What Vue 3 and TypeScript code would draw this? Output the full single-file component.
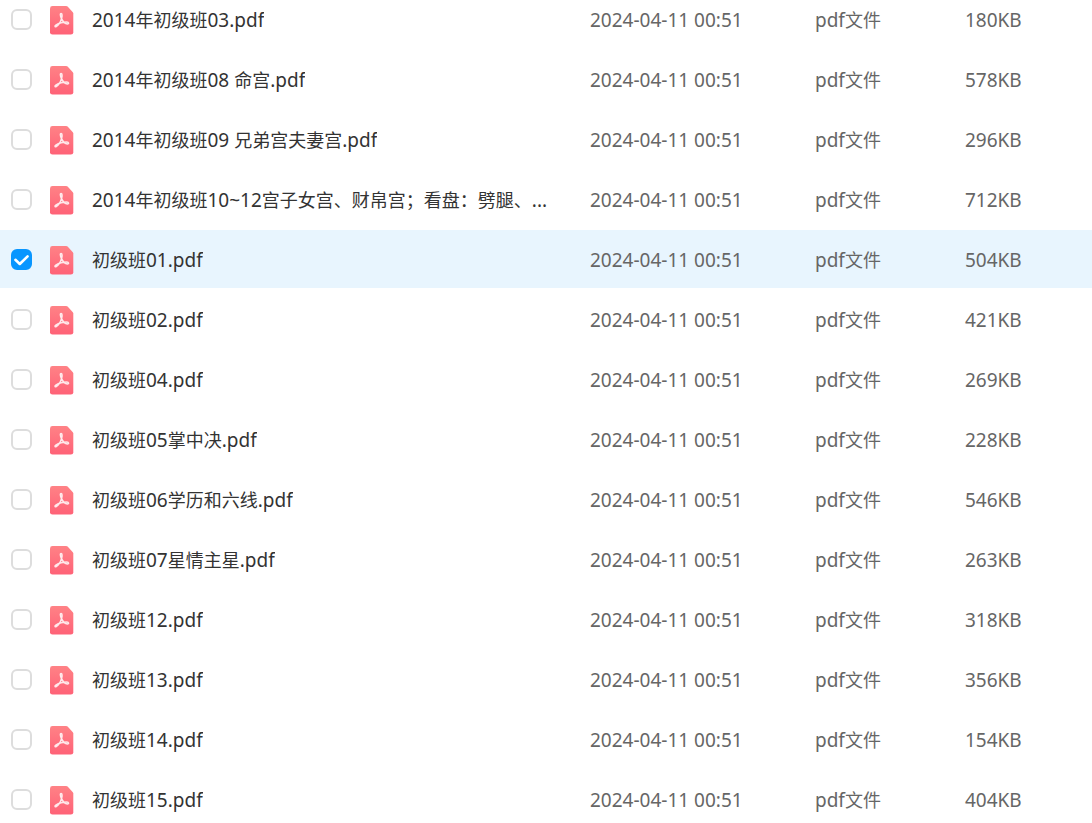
<script setup lang="ts">
import { ref } from 'vue'

interface FileRow {
  name: string
  size: string
  checked: boolean
}

interface Run {
  text: string
  han: boolean
}

const modified = '2024-04-11 00:51'
const kind = 'pdf文件'

const files = ref<FileRow[]>([
  { name: '2014年初级班03.pdf', size: '180KB', checked: false },
  { name: '2014年初级班08 命宫.pdf', size: '578KB', checked: false },
  { name: '2014年初级班09 兄弟宫夫妻宫.pdf', size: '296KB', checked: false },
  { name: '2014年初级班10~12宫子女宫、财帛宫；看盘：劈腿、...', size: '712KB', checked: false },
  { name: '初级班01.pdf', size: '504KB', checked: true },
  { name: '初级班02.pdf', size: '421KB', checked: false },
  { name: '初级班04.pdf', size: '269KB', checked: false },
  { name: '初级班05掌中决.pdf', size: '228KB', checked: false },
  { name: '初级班06学历和六线.pdf', size: '546KB', checked: false },
  { name: '初级班07星情主星.pdf', size: '263KB', checked: false },
  { name: '初级班12.pdf', size: '318KB', checked: false },
  { name: '初级班13.pdf', size: '356KB', checked: false },
  { name: '初级班14.pdf', size: '154KB', checked: false },
  { name: '初级班15.pdf', size: '404KB', checked: false },
])

// Latin and Han runs are set in slightly different sizes so they look even.
function runs(text: string): Run[] {
  return (text.match(/[\x20-\x7e]+|[^\x20-\x7e]+/g) ?? []).map((part) => ({
    text: part,
    han: part.charCodeAt(0) > 0x7e,
  }))
}
</script>

<template>
  <main class="viewport">
    <table class="files">
      <colgroup>
        <col />
        <col class="col-date" />
        <col class="col-kind" />
        <col class="col-size" />
      </colgroup>
      <tbody>
        <tr v-for="(file, i) in files" :key="file.name" :class="{ selected: file.checked }">
          <td>
            <div class="entry">
              <span class="tick">
                <input :id="`file-${i}`" v-model="file.checked" type="checkbox" />
                <svg v-if="file.checked" viewBox="0 0 21 21" aria-hidden="true">
                  <path d="M4.4 10.8 L8.8 15 L16.6 7.4" />
                </svg>
              </span>
              <svg class="pdf" viewBox="0 0 24 29" aria-hidden="true">
                <defs>
                  <linearGradient :id="`pdf-fill-${i}`" x1="0" y1="0" x2="0" y2="1">
                    <stop offset="0" stop-color="#ff8286" />
                    <stop offset="1" stop-color="#ff6277" />
                  </linearGradient>
                </defs>
                <path
                  :fill="`url(#pdf-fill-${i})`"
                  d="M2.5 0 H16.2 Q17 0 17.6 .6 L22.8 6.2 Q23.3 6.8 23.3 7.6 V26.2 Q23.3 28.6 20.9 28.6 H2.5 Q0 28.6 0 26.2 V2.4 Q0 0 2.5 0 Z"
                />
                <path
                  class="swirl"
                  d="M11.4 12.4 C10.2 10.2 10 7.4 11.1 7.4 C12.3 7.4 12.3 10 11.6 12.4 C10.8 15.2 8.4 19.2 6.2 20.6 C5 21.2 4.4 20 5.8 19.1 C8.6 17.3 13.2 16.1 16.8 16.1 C19 16.1 19 17.9 17.4 17.9 C15 17.9 12.6 15 11.4 12.4 Z"
                />
              </svg>
              <label class="name" :for="`file-${i}`"
                ><span v-for="(run, r) in runs(file.name)" :key="r" :class="{ han: run.han }">{{ run.text }}</span></label
              >
            </div>
          </td>
          <td>{{ modified }}</td>
          <td><span v-for="(run, r) in runs(kind)" :key="r" :class="{ han: run.han }">{{ run.text }}</span></td>
          <td>{{ file.size }}</td>
        </tr>
      </tbody>
    </table>
  </main>
</template>

<style>
body {
  margin: 0;
  background: #fff;
}
</style>

<style scoped>
.viewport {
  height: 100vh;
  overflow: hidden;
  font-family: 'Noto Sans', 'Noto Sans CJK SC', sans-serif;
  font-size: 19px;
  line-height: 28px;
  color: #666;
}

/* The list is scrolled part of the way into its first row. */
.files {
  width: 100%;
  margin-top: -10px;
  table-layout: fixed;
  border-collapse: separate;
  border-spacing: 0;
}

.col-date {
  width: 225px;
}

.col-kind {
  width: 150px;
}

.col-size {
  width: 127px;
}

td {
  height: 56px;
  padding: 2px 0 0;
  border-bottom: 2px solid #fff;
  vertical-align: middle;
  white-space: pre;
}

.selected td {
  background: #e8f5fe;
  background-clip: padding-box;
}

.entry {
  display: flex;
  align-items: center;
  padding: 0 32px 0 11px;
}

.tick {
  display: grid;
  flex: none;
  width: 21px;
  height: 21px;
  margin: 0 18px 2px 0;
}

.tick > * {
  grid-area: 1 / 1;
}

.tick input {
  appearance: none;
  box-sizing: border-box;
  width: 21px;
  height: 21px;
  margin: 0;
  border: 2px solid #ddd;
  border-radius: 6px;
  background: #fff;
}

.tick input:checked {
  border-color: #0896ff;
  background: #0896ff;
}

.tick svg {
  width: 21px;
  height: 21px;
  pointer-events: none;
  fill: none;
  stroke: #fff;
  stroke-width: 2.6;
  stroke-linecap: round;
  stroke-linejoin: round;
}

.pdf {
  flex: none;
  width: 24px;
  height: 29px;
  margin-right: 18px;
}

.swirl {
  fill: none;
  stroke: #fff;
  stroke-opacity: 0.85;
  stroke-width: 1.5;
  stroke-linejoin: round;
}

.name {
  overflow: hidden;
  color: #333;
  text-overflow: ellipsis;
}

.han {
  font-family: 'Noto Sans CJK SC', sans-serif;
  font-size: 18px;
  line-height: 1;
}
</style>
